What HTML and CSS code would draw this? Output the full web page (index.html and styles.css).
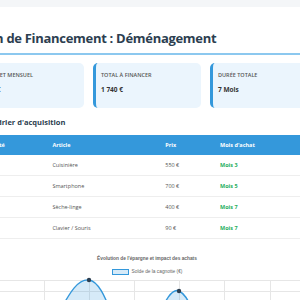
FILE: index.html
```html
<!DOCTYPE html>
<html lang="fr">
<head>
  <meta charset="UTF-8">
  <title>Plan de Financement</title>
  <link rel="stylesheet" href="styles.css">
</head>
<body>

  <div class="container">
    <h1 class="titre">Plan de Financement : Déménagement</h1>

    <div class="cartes">
      <div class="carte">
        <div class="carte-label">Budget mensuel</div>
        <div class="carte-valeur">250 €</div>
      </div>
      <div class="carte">
        <div class="carte-label">Total à financer</div>
        <div class="carte-valeur">1 740 €</div>
      </div>
      <div class="carte">
        <div class="carte-label">Durée totale</div>
        <div class="carte-valeur">7 Mois</div>
      </div>
    </div>

    <h2 class="sous-titre">Calendrier d'acquisition</h2>

    <table class="calendrier">
      <thead>
        <tr>
          <th>Priorité</th>
          <th>Article</th>
          <th>Prix</th>
          <th>Mois d'achat</th>
        </tr>
      </thead>
      <tbody>
        <tr><td>1</td><td>Cuisinière</td><td>550 €</td><td class="mois">Mois 3</td></tr>
        <tr><td>2</td><td>Smartphone</td><td>700 €</td><td class="mois">Mois 5</td></tr>
        <tr><td>3</td><td>Sèche-linge</td><td>400 €</td><td class="mois">Mois 7</td></tr>
        <tr><td>4</td><td>Clavier / Souris</td><td>90 €</td><td class="mois">Mois 7</td></tr>
      </tbody>
    </table>

    <div class="graphique">
      <div class="graphique-titre">Évolution de l'épargne et impact des achats</div>
      <div class="legende"><span class="legende-boite"></span>Solde de la cagnotte (€)</div>
      <svg class="courbe" width="342" height="175" viewBox="0 0 342 175">
        <g stroke="#e6e6e6" stroke-width="1">
          <line x1="23" y1="5.5" x2="339" y2="5.5"/>
          <line x1="23" y1="16.5" x2="339" y2="16.5"/>
          <line x1="23" y1="27.5" x2="339" y2="27.5"/>
          <line x1="23" y1="38.5" x2="339" y2="38.5"/>
          <line x1="23" y1="49.5" x2="339" y2="49.5"/>
          <line x1="23" y1="60.5" x2="339" y2="60.5"/>
          <line x1="23.5" y1="5" x2="23.5" y2="175"/>
          <line x1="68.5" y1="5" x2="68.5" y2="175"/>
          <line x1="113.5" y1="5" x2="113.5" y2="175"/>
          <line x1="158.5" y1="5" x2="158.5" y2="175"/>
          <line x1="203.5" y1="5" x2="203.5" y2="175"/>
          <line x1="248.5" y1="5" x2="248.5" y2="175"/>
          <line x1="294.5" y1="5" x2="294.5" y2="175"/>
        </g>
        <path fill="rgba(52,152,219,0.2)" d="M23 115 C41 93 50 82 68 60 C86 38 96 2.9 113 5 C132 7.3 139 68.7 158 71 C175 73.1 188.8 9 203 16 C224.8 26.6 226 104.4 248 115 C262.5 122 275.6 82 294 60 L294 170 L23 170 Z"/>
        <path fill="none" stroke="#3498db" stroke-width="1.4" d="M23 115 C41 93 50 82 68 60 C86 38 96 2.9 113 5 C132 7.3 139 68.7 158 71 C175 73.1 188.8 9 203 16 C224.8 26.6 226 104.4 248 115 C262.5 122 275.6 82 294 60"/>
        <g fill="#2c3e50">
          <circle cx="113" cy="5" r="2.2"/>
          <circle cx="203" cy="16" r="2.2"/>
          <circle cx="68" cy="60" r="2.2"/>
          <circle cx="294" cy="60" r="2.2"/>
        </g>
      </svg>
    </div>
  </div>

</body>
</html>
```

FILE: styles.css
```css
body {
  margin: 0;
  padding: 7px 6px 0 0;
  background: #f4f6f8;
  font-family: "Open Sans", Arial, sans-serif;
  color: #2c3e50;
  display: flex;
  justify-content: center;
}
.container {
  flex: none;
  width: 342px;
  padding: 20px;
  background: #fff;
  border-radius: 6px;
}
.titre {
  margin: 0;
  font-size: 13px;
  letter-spacing: -0.3px;
  line-height: 23px;
  font-weight: bold;
  padding-bottom: 3px;
  border-bottom: 2px solid #8cc8ef;
}
.cartes {
  display: grid;
  grid-template-columns: repeat(3, 1fr);
  gap: 9px;
  margin-top: 8px;
}
.carte {
  height: 45px;
  box-sizing: border-box;
  background: #ebf5fd;
  border-left: 3px solid #3498db;
  border-radius: 5px;
  padding: 8px 5px;
}
.carte-label {
  font-size: 5.5px;
  font-weight: 600;
  text-transform: uppercase;
  color: #555;
  line-height: 9px;
}
.carte-valeur {
  margin-top: 5px;
  font-size: 6.5px;
  font-weight: bold;
  color: #333;
}
.sous-titre {
  margin: 9px 0 8px;
  font-size: 7.5px;
  font-weight: bold;
  color: #2c3e50;
}
.calendrier {
  width: 100%;
  border-collapse: collapse;
  font-size: 5.5px;
}
.calendrier th, .calendrier td {
  text-align: left;
  padding: 0 8px;
}
.calendrier th {
  background: #3498db;
  color: #fff;
  font-weight: bold;
  height: 20px;
}
.calendrier td {
  height: 20px;
  color: #555;
  border-bottom: 1px solid #eee;
}
.calendrier th:nth-child(1) { width: 20%; }
.calendrier th:nth-child(2) { width: 33%; }
.calendrier th:nth-child(3) { width: 16%; }
.calendrier td.mois {
  color: #27ae60;
  font-weight: bold;
}
.graphique {
  margin-top: 16px;
  font-family: "Liberation Sans", Arial, sans-serif;
  color: #666;
  text-align: center;
}
.graphique-titre {
  font-size: 4.8px;
  font-weight: bold;
  line-height: 8px;
}
.legende {
  margin-top: 6px;
  font-size: 4.8px;
  line-height: 6px;
  display: flex;
  justify-content: center;
  align-items: center;
  gap: 3px;
}
.legende-boite {
  width: 15px;
  height: 4px;
  background: rgba(52, 152, 219, 0.2);
  border: 1px solid #3498db;
}
.courbe {
  display: block;
  overflow: visible;
}
```
